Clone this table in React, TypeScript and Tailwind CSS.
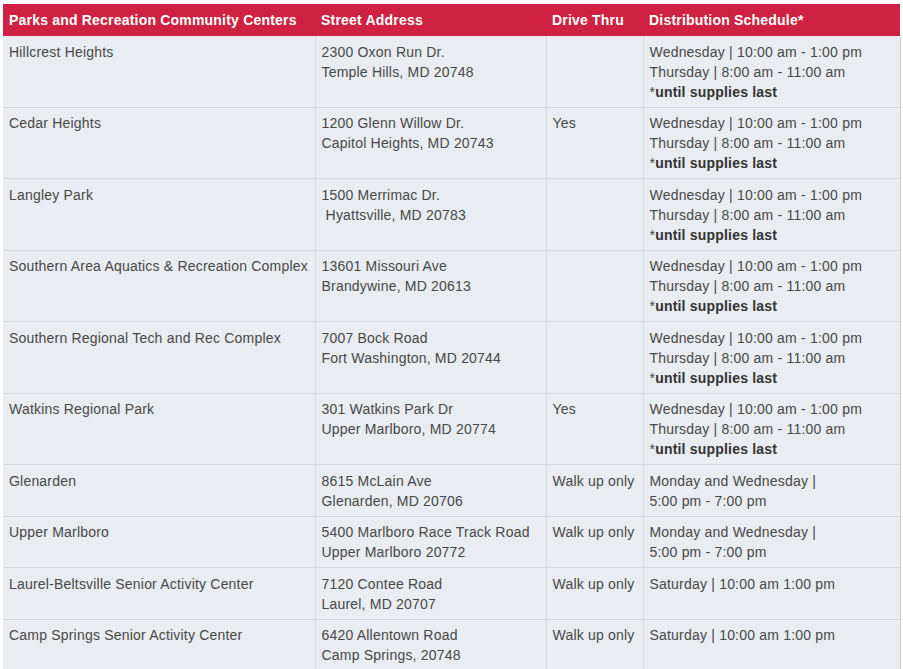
import React from "react";

type Row = {
  name: string;
  address: string[];
  drive: string;
  schedule: "weekly" | "monwed" | "sat";
};

const rows: Row[] = [
  { name: "Hillcrest Heights", address: ["2300 Oxon Run Dr.", "Temple Hills, MD 20748"], drive: "", schedule: "weekly" },
  { name: "Cedar Heights", address: ["1200 Glenn Willow Dr.", "Capitol Heights, MD 20743"], drive: "Yes", schedule: "weekly" },
  { name: "Langley Park", address: ["1500 Merrimac Dr.", "\u00a0Hyattsville, MD 20783"], drive: "", schedule: "weekly" },
  { name: "Southern Area Aquatics & Recreation Complex", address: ["13601 Missouri Ave", "Brandywine, MD 20613"], drive: "", schedule: "weekly" },
  { name: "Southern Regional Tech and Rec Complex", address: ["7007 Bock Road", "Fort Washington, MD 20744"], drive: "", schedule: "weekly" },
  { name: "Watkins Regional Park", address: ["301 Watkins Park Dr", "Upper Marlboro, MD 20774"], drive: "Yes", schedule: "weekly" },
  { name: "Glenarden", address: ["8615 McLain Ave", "Glenarden, MD 20706"], drive: "Walk up only", schedule: "monwed" },
  { name: "Upper Marlboro", address: ["5400 Marlboro Race Track Road", "Upper Marlboro 20772"], drive: "Walk up only", schedule: "monwed" },
  { name: "Laurel-Beltsville Senior Activity Center", address: ["7120 Contee Road", "Laurel, MD 20707"], drive: "Walk up only", schedule: "sat" },
  { name: "Camp Springs Senior Activity Center", address: ["6420 Allentown Road", "Camp Springs, 20748"], drive: "Walk up only", schedule: "sat" },
];

function Schedule({ kind }: { kind: Row["schedule"] }) {
  if (kind === "weekly") {
    return (
      <>
        <div>Wednesday | 10:00 am - 1:00 pm</div>
        <div>Thursday | 8:00 am - 11:00 am</div>
        <div>
          *<b className="font-bold text-[#333]">until supplies last</b>
        </div>
      </>
    );
  }
  if (kind === "monwed") {
    return (
      <>
        <div>Monday and Wednesday |</div>
        <div>5:00 pm - 7:00 pm</div>
      </>
    );
  }
  return <div>Saturday | 10:00 am 1:00 pm</div>;
}

const cell = "align-top px-[6px] pt-[5.5px] pb-[5px] border-r border-[#d5d8dd]";

export default function App() {
  return (
    <div className="min-h-screen bg-white pt-[4px] pl-[3px] pr-[3px] font-['Liberation_Sans',Arial,sans-serif] text-[14px] leading-5 tracking-[0.2px] text-[#484848]">
      <table className="w-[897px] border-collapse table-fixed">
        <colgroup>
          <col className="w-[312px]" />
          <col className="w-[231px]" />
          <col className="w-[97px]" />
          <col className="w-[257px]" />
        </colgroup>
        <thead>
          <tr className="bg-[#cf2242] text-white text-left">
            <th className="px-[6px] pt-[6px] pb-[6px] font-bold">Parks and Recreation Community Centers</th>
            <th className="px-[6px] pt-[6px] pb-[6px] font-bold">Street Address</th>
            <th className="px-[6px] pt-[6px] pb-[6px] font-bold">Drive Thru</th>
            <th className="px-[6px] pt-[6px] pb-[6px] font-bold">Distribution Schedule*</th>
          </tr>
        </thead>
        <tbody className="bg-[#e9ecf0]">
          {rows.map((r) => (
            <tr key={r.name} className="border-b border-[#d5d8dd]">
              <td className={cell}>{r.name}</td>
              <td className={cell}>
                {r.address.map((a) => (
                  <div key={a}>{a}</div>
                ))}
              </td>
              <td className={cell}>{r.drive}</td>
              <td className={cell + " border-r-[#c9ccd1]"}>
                <Schedule kind={r.schedule} />
              </td>
            </tr>
          ))}
        </tbody>
      </table>
    </div>
  );
}
